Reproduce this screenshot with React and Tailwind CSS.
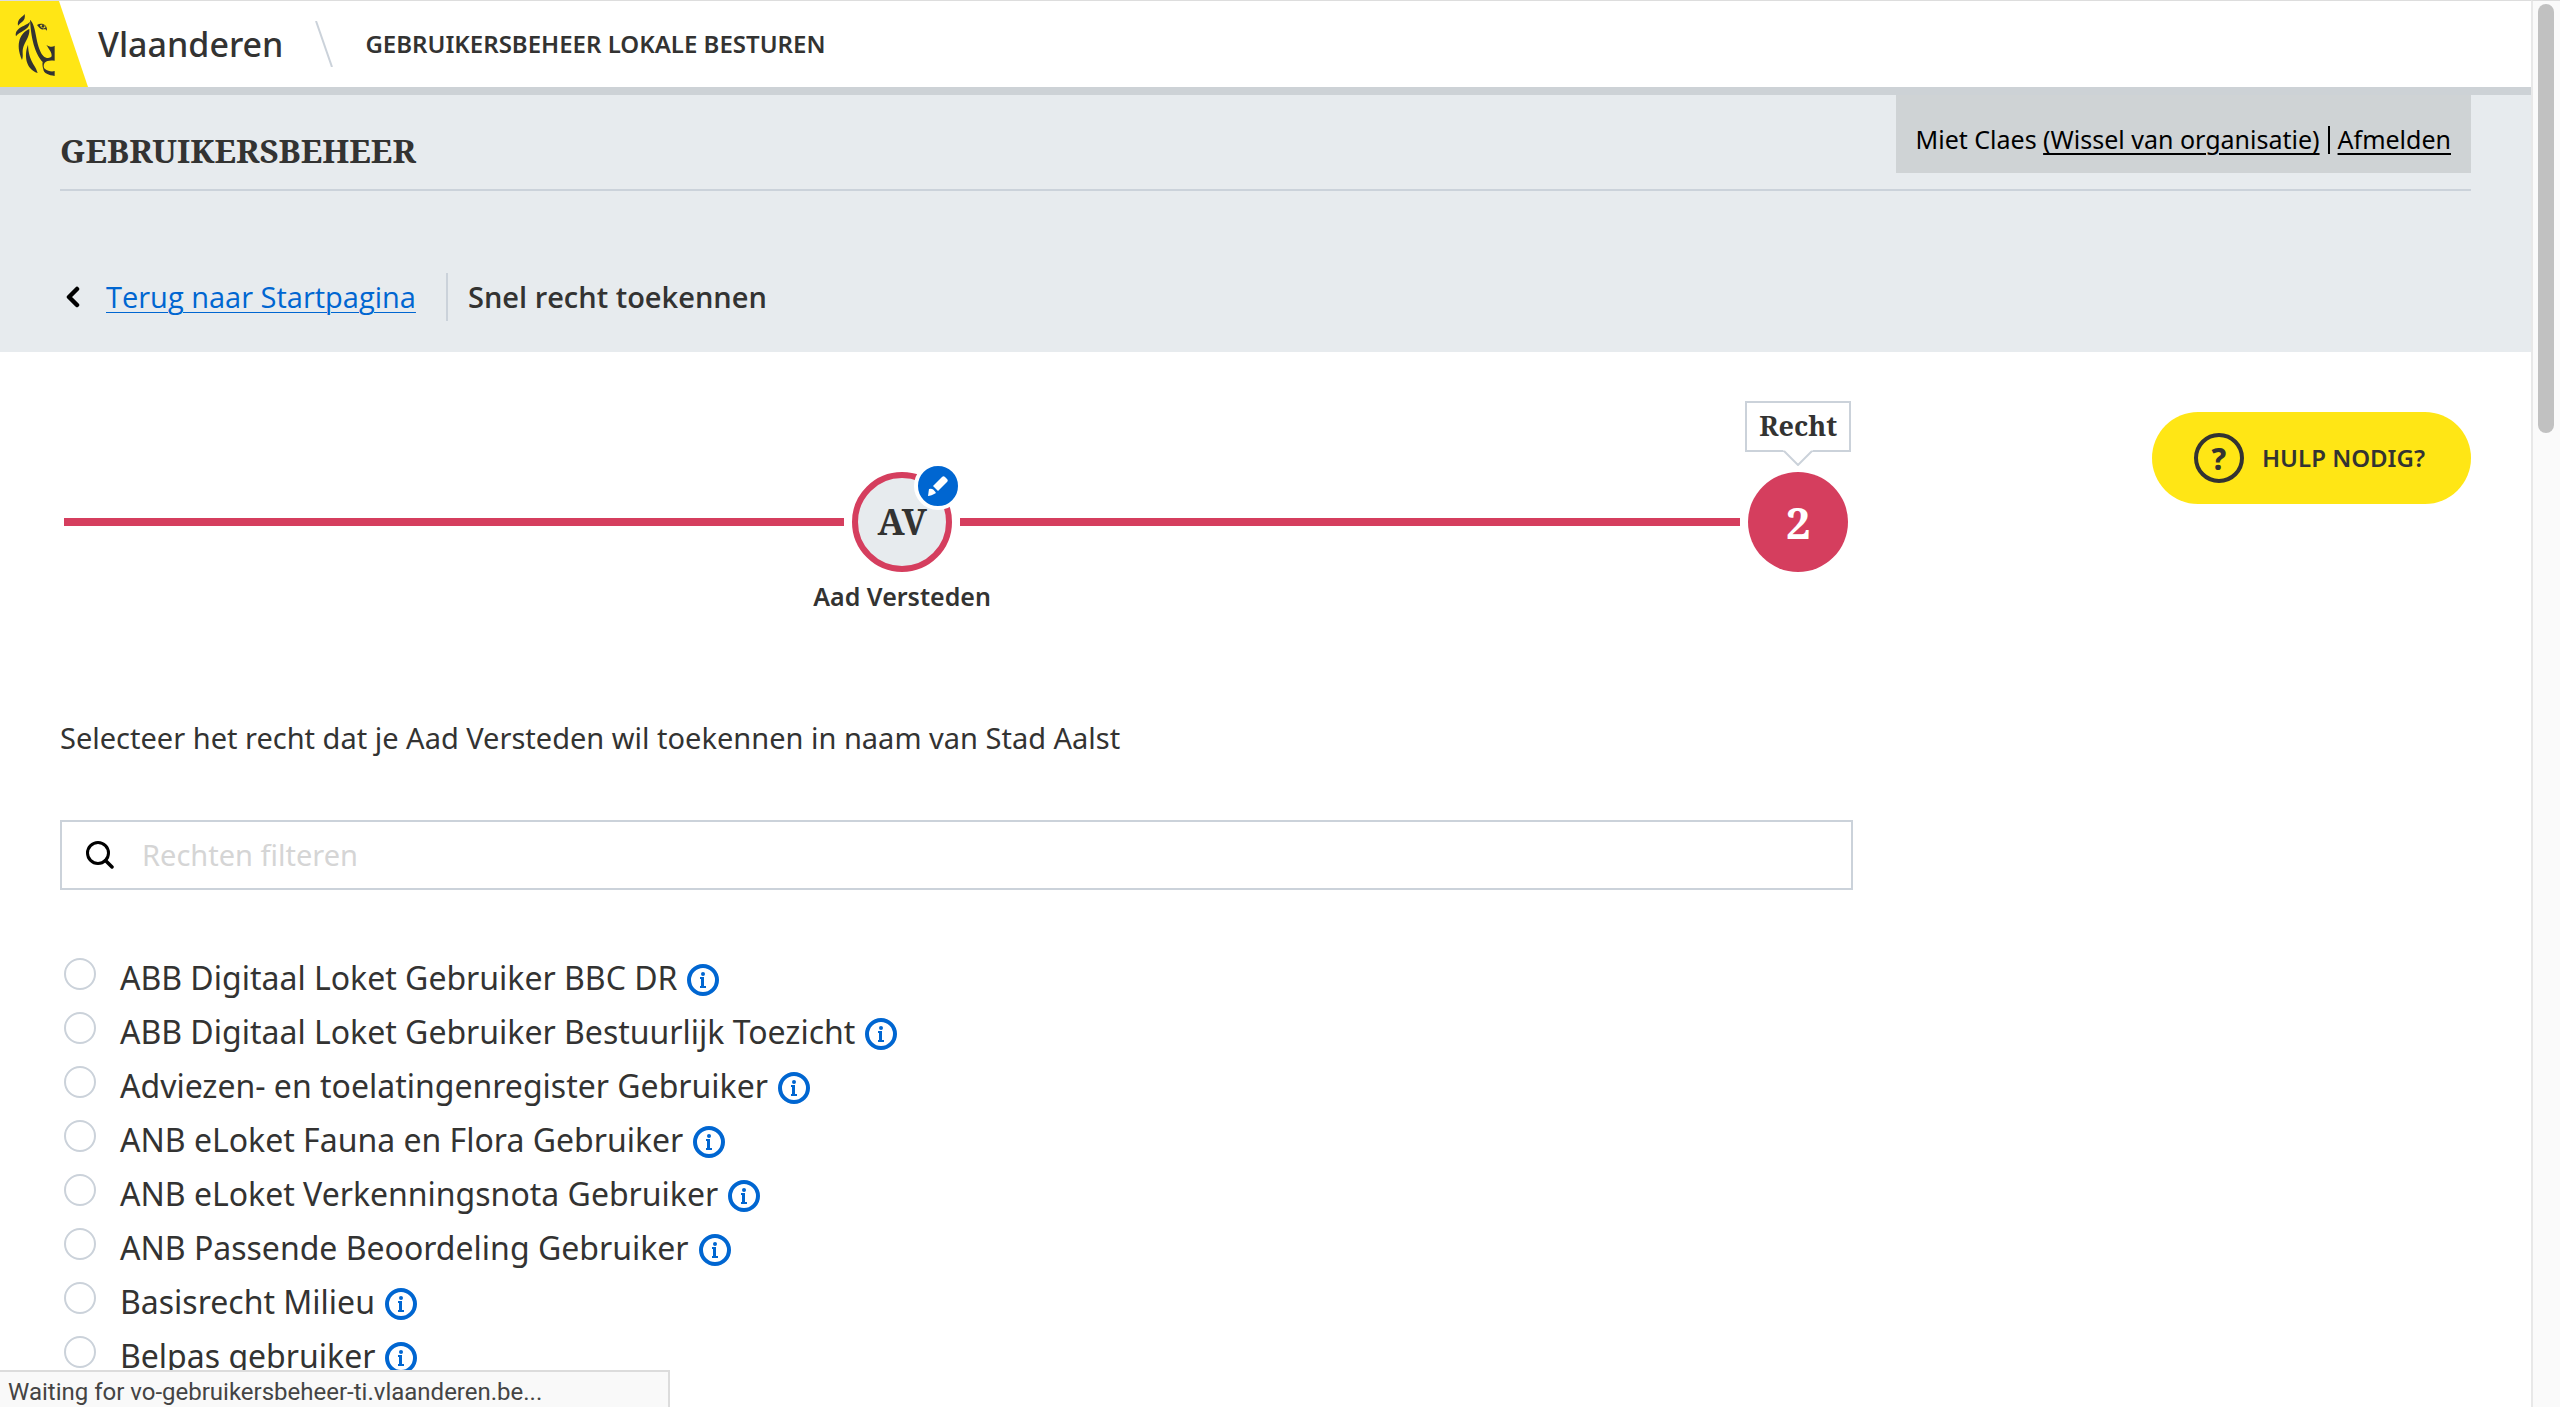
import { useState } from "react";

const RIGHTS = [
  "ABB Digitaal Loket Gebruiker BBC DR",
  "ABB Digitaal Loket Gebruiker Bestuurlijk Toezicht",
  "Adviezen- en toelatingenregister Gebruiker",
  "ANB eLoket Fauna en Flora Gebruiker",
  "ANB eLoket Verkenningsnota Gebruiker",
  "ANB Passende Beoordeling Gebruiker",
  "Basisrecht Milieu",
  "Belpas gebruiker",
];

function LionLogo() {
  return (
    <svg viewBox="0 0 264 258" className="h-[86px] w-[88px] shrink-0" aria-hidden="true">
      <path d="M0 0H177L264 258H0Z" fill="#ffe615" />
      <g fill="#333332" transform="translate(0 -3)">
        <path d="M74 42C70 50 50 56 54 77C62 66 78 64 74 42Z" />
        <path d="M90 65C80 78 42 82 48 109C56 94 88 92 90 65Z" />
        <path d="M88 87C62 98 44 130 66 180C71 168 66 158 69 145C73 125 90 112 88 87Z" />
        <path d="M84 134C72 165 76 206 113 219C108 196 86 186 84 134Z" />
        <path
          fillRule="evenodd"
          d="M90 59C112 80 104 134 130 168C138 176 150 176 155 169C156 156 148 150 139 134C148 141 158 142 164 137V182C150 180 140 182 134 188C130 194 130 202 134 206C144 213 154 216 164 213V228C146 226 131 220 130 208C127 198 127 190 128 186C110 166 94 130 90 59Z"
        />
        <path
          fillRule="evenodd"
          d="M111 75C123 67 143 72 141 93C139 88 136 87 132 88C124 90 118 84 111 75ZM120 76C122 86 134 88 137 81C134 75 127 73 120 76Z"
        />
        <circle cx="129" cy="79" r="4" />
      </g>
    </svg>
  );
}

function InfoIcon() {
  return (
    <svg viewBox="0 0 32 32" className="size-8" aria-hidden="true">
      <circle cx="16" cy="16" r="14" fill="none" stroke="#0066d1" strokeWidth="4" />
      <circle cx="16" cy="10" r="2" fill="#0066d1" />
      <path d="M13 13h4v9h2v2h-6v-2h1v-7h-1z" fill="#0066d1" />
    </svg>
  );
}

function Header() {
  return (
    <header className="flex h-[95px] items-center border-t border-b-8 border-t-[#ddd] border-b-[#cdd2d6] bg-white">
      <LionLogo />
      <span className="ml-[10px] text-[34px] font-medium">Vlaanderen</span>
      <svg viewBox="0 0 18 46" className="ml-8 h-[46px] w-[18px]" aria-hidden="true">
        <path d="M1 0L17 46" stroke="#cbd2da" strokeWidth="2" />
      </svg>
      <span className="ml-8 text-[24px] font-semibold">GEBRUIKERSBEHEER LOKALE BESTUREN</span>
    </header>
  );
}

function PageIntro() {
  return (
    <section className="h-[257px] bg-[#e7ebee] px-[60px]">
      <div className="flex h-24 items-start justify-between border-b-2 border-[#cbd2da]">
        <h1 className="mt-8 font-['Noto_Serif','DejaVu_Serif',serif] text-[33px] leading-[48px] font-bold">
          GEBRUIKERSBEHEER
        </h1>
        <p className="flex h-[78px] items-center bg-[#cfd3d5] px-5 pt-3 text-[25px] text-black">
          Miet Claes&nbsp;
          <a href="#organisatie" className="underline decoration-2 underline-offset-4">(Wissel van organisatie)</a>
          <span className="mx-2 h-7 w-[2px] bg-black" />
          <a href="#afmelden" className="underline decoration-2 underline-offset-4">Afmelden</a>
        </p>
      </div>
      <nav className="mt-[82px] flex h-12 items-center font-['Open_Sans',sans-serif] text-[29px]">
        <svg viewBox="0 0 16 22" className="ml-1 h-[22px] w-4" aria-hidden="true">
          <path d="M13 3L5 11L13 19" fill="none" stroke="#000" strokeWidth="4.5" strokeLinecap="round" strokeLinejoin="round" />
        </svg>
        <a href="#start" className="ml-[26px] text-[#0066d1] underline decoration-1 underline-offset-4">
          Terug naar Startpagina
        </a>
        <span className="ml-[30px] h-12 w-[2px] bg-[#cbd2da]" />
        <h2 className="ml-5 font-semibold">Snel recht toekennen</h2>
      </nav>
    </section>
  );
}

function Stepper() {
  return (
    <div className="mr-[5px] ml-1 flex items-center gap-2 pt-[120px]">
      <div className="h-2 flex-1 bg-[#d53e5e]" />
      <div className="relative flex size-[100px] items-center justify-center rounded-full border-[6px] border-[#d53e5e] bg-[#e7ebee] font-['Noto_Serif','DejaVu_Serif',serif] text-[36px] font-bold">
        AV
        <button
          type="button"
          aria-label="Gebruiker wijzigen"
          className="absolute -top-4 -right-4 flex size-12 items-center justify-center rounded-full border-4 border-white bg-[#0066d1]"
        >
          <svg viewBox="0 0 20 20" className="size-5" fill="#fff" aria-hidden="true">
            <path d="M14 1Q15.500 -.5 17 1L19 3Q20.500 4.500 19 6L10 15L5 10Z" />
            <path d="M1 13Q5 11.500 8 17Q3 20 0 20Z" />
          </svg>
        </button>
        <span className="absolute top-[100px] font-['Noto_Sans',sans-serif] text-[25px] leading-9 font-semibold whitespace-nowrap">
          Aad Versteden
        </span>
      </div>
      <div className="h-2 flex-1 bg-[#d53e5e]" />
      <div className="relative flex size-[100px] items-center justify-center rounded-full bg-[#d53e5e] font-['Noto_Serif','DejaVu_Serif',serif] text-[44px] font-bold text-white">
        2
        <div className="absolute bottom-[106px] flex flex-col items-center">
          <span className="flex h-[51px] items-center border-2 border-[#cbd2da] bg-white px-3 text-[27px] text-[#333332]">
            Recht
          </span>
          <svg viewBox="0 0 30 16" className="-mt-[2px] h-4 w-[30px]" aria-hidden="true">
            <path d="M0 0H30L15 15Z" fill="#fff" />
            <path d="M1 1L15 15L29 1" fill="none" stroke="#cbd2da" strokeWidth="2" />
          </svg>
        </div>
      </div>
    </div>
  );
}

function RightOption({ name, checked, onSelect }) {
  return (
    <li className="flex h-[54px] items-center">
      <label className="flex items-center">
        <input
          type="radio"
          name="recht"
          checked={checked}
          onChange={onSelect}
          className="mr-6 mb-2 ml-1 size-8 appearance-none rounded-full border-2 border-[#cbd2da] bg-white checked:border-[10px] checked:border-[#0066d1]"
        />
        <span className="text-[32px] leading-[54px]">{name}</span>
      </label>
      <button type="button" aria-label={`Info over ${name}`} className="mt-1 ml-[10px]">
        <InfoIcon />
      </button>
    </li>
  );
}

export default function App() {
  const [selected, setSelected] = useState(null);
  const [filter, setFilter] = useState("");
  const visible = RIGHTS.filter((r) => r.toLowerCase().includes(filter.toLowerCase()));

  return (
    <div className="flex h-screen overflow-hidden bg-white font-['Noto_Sans',sans-serif] text-[#333332]">
      <div className="min-w-0 flex-1">
        <Header />
        <PageIntro />
        <main className="grid grid-cols-[3fr_1fr] items-start gap-5 px-[60px]">
          <div>
            <Stepper />
            <p className="mt-[142px] text-[29px] leading-12">
              Selecteer het recht dat je Aad Versteden wil toekennen in naam van Stad Aalst
            </p>
            <label className="mt-[58px] flex h-[70px] items-center border-2 border-[#cbd2da] pl-6">
              <svg viewBox="0 0 28 28" className="size-7 shrink-0" fill="none" stroke="#000" aria-hidden="true">
                <circle cx="12" cy="12" r="10.5" strokeWidth="3" />
                <path d="M19.500 19.500L26 26" strokeWidth="3.500" strokeLinecap="round" />
              </svg>
              <input
                type="text"
                aria-label="Rechten filteren"
                placeholder="Rechten filteren"
                value={filter}
                onChange={(e) => setFilter(e.target.value)}
                className="ml-7 min-w-0 flex-1 text-[29px] outline-none placeholder:text-[#d5d5d5]"
              />
            </label>
            <ul className="mt-[61px]">
              {visible.map((name) => (
                <RightOption
                  key={name}
                  name={name}
                  checked={selected === name}
                  onSelect={() => setSelected(name)}
                />
              ))}
            </ul>
          </div>
          <button
            type="button"
            className="mt-[60px] flex h-[92px] items-center gap-[18px] justify-self-end rounded-full bg-[#ffe615] pr-[46px] pl-[42px] text-[24px] font-semibold"
          >
            <span className="flex size-[50px] items-center justify-center rounded-full border-4 border-[#333332] text-[30px] font-extrabold">
              ?
            </span>
            HULP NODIG?
          </button>
        </main>
      </div>
      <div className="w-[29px] shrink-0 border-t border-l-2 border-t-[#ddd] border-l-[#e8e8e8] bg-[#fafafa] pt-[3px] pl-[5px]">
        <div className="h-[429px] w-4 rounded-full bg-[#c1c1c1]" />
      </div>
      <div className="fixed bottom-0 left-0 flex h-[37px] w-[670px] items-center border-t-2 border-r-2 border-[#dcdcdc] bg-[#f9f9f9] pt-1 pl-2 font-['Roboto',sans-serif] text-[24px] text-[#444]">
        Waiting for vo-gebruikersbeheer-ti.vlaanderen.be...
      </div>
    </div>
  );
}
